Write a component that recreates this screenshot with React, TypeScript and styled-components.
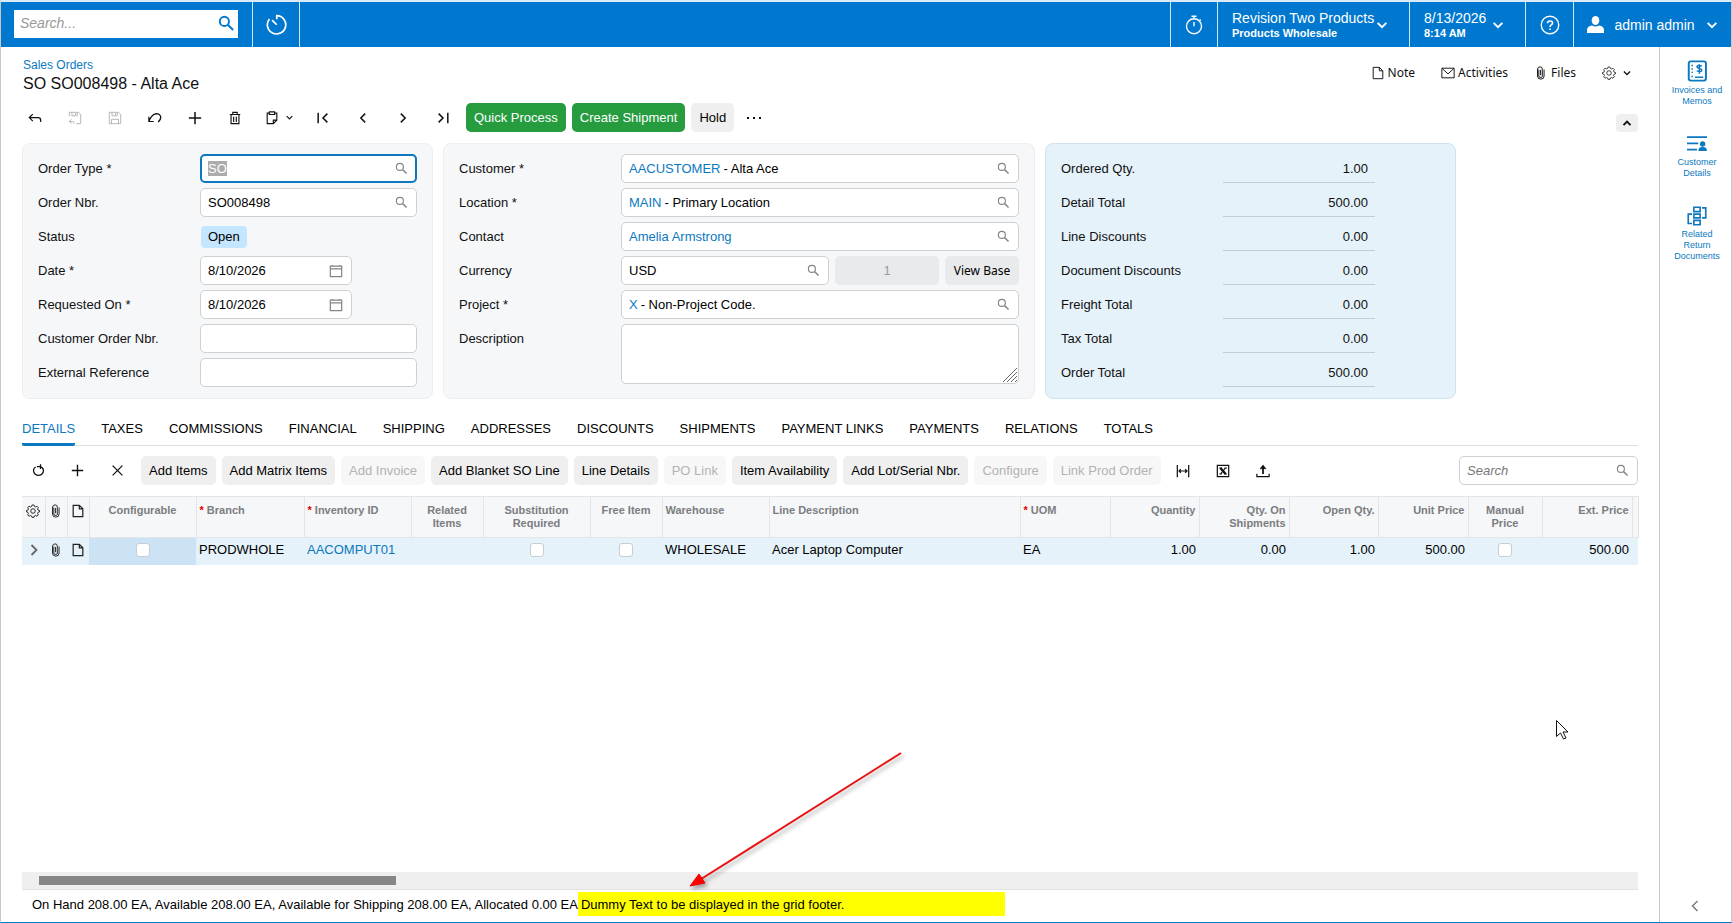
import React, { ReactNode, useEffect, useRef, useId } from 'react';
import styled, { createGlobalStyle, css } from 'styled-components';

const BLUE = '#0078cf';
const LINK = '#0b78bf';

const Global = createGlobalStyle`
  * { box-sizing: border-box; }
  body { margin: 0; background: #fff; color: #111; font: 13px/16px "Liberation Sans", Arial, sans-serif; }
  button, input, textarea { font: inherit; color: inherit; }
  button { cursor: pointer; }
  a { color: ${LINK}; text-decoration: none; }
  svg { display: block; flex: none; }
`;

/* ---------- icons ---------- */

const iconPaths: Record<string, ReactNode> = {
  search: <><circle cx="6" cy="6" r="4.300" /><path d="M9.200 9.200l5 5" strokeWidth="1.900" /></>,
  back: <path d="M5.500 3.500L1.500 7.500l4 4M1.500 7.500h10q3 0 3 3v2" />,
  saveBack: <path d="M1.500 6V1.500h10.500l2.500 2.500v10.500h-5M4.500 1.500v4h6v-4M8.500 2.500v2M4 9.500l-2.500 2.500L4 14.500M1.500 12h4q1.500 0 1.500 2.500" />,
  save: <path d="M1.500 1.500h10.500l2.500 2.500v10.500h-13zM4.500 1.500v4h6v-4M8.500 2.500v2M4 14.500v-5h8v5" />,
  undo: <path d="M1 6.500V12h5.500M1 12Q4 4 9.500 3q4 0 5 3.500.3 3.500-3 6" />,
  plus: <path d="M8 1v14M1 8h14" strokeWidth="1.700" />,
  trash: <><path d="M2 4h12M5.500 4V1.500h5V4M3.500 4v10.500h9V4" /><path d="M6.500 6.500v6M9.500 6.500v6" /></>,
  clipboard: <path d="M5 2.500H2.500v12h7l4-4v-8H11M5 1h6v3H5zM9.500 14.500v-4h4" />,
  first: <path d="M2.500 2v12M13 3L8 8l5 5" />,
  prev: <path d="M10.500 3L5.500 8l5 5" />,
  next: <path d="M5.500 3l5 5-5 5" />,
  last: <path d="M13.500 2v12M3 3l5 5-5 5" />,
  down: <path d="M3 5.500L8 10.500l5-5" />,
  up: <path d="M4 10.500L8 6.500l4 4" />,
  note: <path d="M2.500 1.500h7l4 4v9h-11zM9.500 1.500v4h4" />,
  mail: <path d="M1 2.500h14v11H1zM1.500 3L8 9l6.500-6" />,
  clip: <path d="M5.500 4v7.500q0 1.500 1.500 1.500h1.500q1 0 1-1.500V3.500Q9.500 1 7 1T4 3.500v8Q4 15 7.800 15t3.700-3.500V4M7.500 4.500v6" />,
  gear: <><circle cx="8" cy="8" r="2.600" /><path d="M6.800 1.200h2.400l.4 1.600 1.400.6 1.500-.9 1.600 1.600-.9 1.500.6 1.400 1.600.4v1.600l-1.600.5-.6 1.300.9 1.600-1.600 1.600-1.500-.9-1.400.6-.4 1.500H6.800l-.4-1.500-1.400-.6-1.500.9-1.600-1.600.9-1.600-.6-1.300-1.600-.5V7.400l1.600-.4.6-1.400-.9-1.500 1.600-1.600 1.500.9 1.400-.6z" /></>,
  calendar: <path d="M1.500 2.500h13v12h-13zM1.500 5.500h13M4 1v1.500M12 1v1.500" />,
  refresh: <path d="M4.500 3.700Q1 6 2.200 9.800 3.800 14 8 14t5.800-4.200Q15 5.500 10.500 3.300M6 3.300h4.500V.300M10.500 3.300V6" />,
  cross: <path d="M2 2l12 12M14 2L2 14" />,
  fit: <path d="M1.500 1v14M14.500 1v14M3.500 8h9M5.500 6l-2 2 2 2M10.500 6l2 2-2 2" />,
  excel: <><path d="M1.500 1.500h13v13h-13z" /><path d="M5 4.500l6 7" strokeWidth="2.800" /><path d="M11 4.500l-6 7M3.800 4.500h3M9.500 4.500h3M3.800 11.500h3M9.500 11.500h3" strokeWidth="1.200" /></>,
  upload: <><path d="M1 11v3.500h14V11" strokeWidth="1.400" /><path d="M8 11.500V2.500" strokeWidth="2" /><path d="M4.500 5.500L8 1l3.500 4.500z" fill="currentColor" strokeWidth=".5" /></>,
  history: <path d="M8.200 4V1.200a7 7 0 1 1-5.600 2.600M8.200 8.200L4.600 4.600" strokeWidth="1.300" />,
  stopwatch: <><circle cx="8" cy="9" r="6" /><path d="M6 1h4M8 1v2M8 5.500V9M12.500 3.500l1 1" /></>,
  help: <><circle cx="8" cy="8" r="7" /><path d="M6 6.500Q6 4.800 8 4.800t2 1.600Q10 7.300 9 7.900 8 8.500 8 9.500M8 10.700v1.300" strokeWidth="1.300" /></>,
  invoice: <><rect x="2" y="1" width="12.500" height="14" rx="1.500" strokeWidth="1.400" /><path d="M4.500 3.500v1M4.500 6v1M4.500 8.500v1M4.500 11.500v1M6.500 12.500h6" /><path d="M11.500 4.300q-3.500-1-3.500.6c0 1.600 3.500.8 3.500 2.400q0 1.700-3.700.6M9.700 3v7" strokeWidth="1.100" /></>,
  customer: <><path d="M0 2.500h16M0 7.500h9M0 12.500h8" strokeWidth="1.400" /><circle cx="12.500" cy="8" r="1.600" fill="currentColor" /><path d="M9.700 13q0-2 2.800-2t2.800 2z" fill="currentColor" /></>,
  related: <path d="M5.500 1h5v3.500h-5zM5.500 6.500h5v3h-5zM5.500 11.500h5V15h-5zM12 1.500h3v8h-3M4 6.500H1V14h3" strokeWidth="1.300" />,
};

const Icon = ({ name, size = 16, weight = 1.1 }: { name: string; size?: number; weight?: number }) => (
  <svg width={size} height={size} viewBox="0 0 16 16" fill="none" stroke="currentColor" strokeWidth={weight} aria-hidden="true">
    {iconPaths[name]}
  </svg>
);

/* ---------- shell ---------- */

const Page = styled.div`
  min-height: 100vh;
  display: flex;
  flex-direction: column;
  border: 1px solid #c8c8c8;
  border-top: 2px solid #d9ecf8;
  border-bottom: 1px solid ${BLUE};
`;
const TopBar = styled.header`
  display: flex;
  height: 45px;
  background: ${BLUE};
  color: #fff;
`;
const TopSearch = styled.label`
  display: flex;
  align-items: center;
  width: 224px;
  height: 28px;
  margin: 8px 14px 0 13px;
  padding: 0 3px 2px 6px;
  background: #fff;
  color: ${BLUE};
`;
const PlainInput = styled.input`
  flex: 1;
  min-width: 0;
  width: 100%;
  height: 100%;
  padding: 0;
  border: 0;
  outline: 0;
  background: transparent;
  color: #000;
  &::placeholder { color: #777; font-style: italic; opacity: 1; }
  &::selection { background: #acacac; color: #fff; }
`;
const TopSearchInput = styled(PlainInput)`
  font-size: 14px;
  &::placeholder { color: #999; }
`;
const TopButton = styled.button<{ $w: number; $right?: boolean }>`
  display: flex;
  align-items: center;
  justify-content: center;
  width: ${p => p.$w}px;
  padding: 0;
  border: 0;
  border-left: 1px solid #cfe8f8;
  ${p => p.$right && css`border-right: 1px solid #cfe8f8;`}
  background: none;
  color: #fff;
`;
const TopMenu = styled(TopButton)`
  justify-content: space-between;
  padding: 0 20px 0 14px;
  text-align: left;
  font-size: 14px;
`;
const UserMenu = styled(TopMenu)`
  padding: 0 12px 0 13px;
`;
const Small = styled.span`
  display: block;
  font-size: 11px;
  line-height: 14px;
  font-weight: bold;
`;
const Grow = styled.div` flex: 1; `;
const Body = styled.div`
  flex: 1;
  display: flex;
`;
const Main = styled.main`
  flex: 1;
  min-width: 0;
  display: flex;
  flex-direction: column;
  padding: 0 21px 0 21px;
`;
const Side = styled.nav`
  width: 72px;
  flex: none;
  display: flex;
  flex-direction: column;
  align-items: center;
  border-left: 1px solid #c8c8c8;
  padding: 13px 0 0 3px;
`;
const SideLink = styled.a`
  display: flex;
  flex-direction: column;
  align-items: center;
  gap: 3px;
  margin-bottom: 27px;
  font-size: 9px;
  line-height: 11px;
  text-align: center;
`;
const SideToggle = styled.button`
  margin: auto 5px 8px 0;
  padding: 0;
  border: 0;
  background: none;
  color: #777;
`;

/* ---------- title and actions ---------- */

const TitleRow = styled.div`
  display: flex;
  justify-content: space-between;
  height: 56px;
  padding: 10px 6px 0 1px;
`;
const Crumb = styled.a`
  font-size: 12px;
`;
const Title = styled.h1`
  margin: 0;
  font-size: 16px;
  line-height: 22px;
  font-weight: normal;
`;
const Actions = styled.div`
  display: flex;
  align-items: center;
  height: 32px;
  gap: 26px;
`;
const Action = styled.button<{ $gap?: number }>`
  display: flex;
  align-items: center;
  gap: ${p => p.$gap ?? 3}px;
  padding: 0;
  border: 0;
  background: none;
  font: 12px/16px "Noto Sans", "Liberation Sans", sans-serif;
`;
const Toolbar = styled.div`
  display: flex;
  align-items: center;
  height: 29px;
`;
const IconButton = styled.button<{ $w?: number }>`
  display: flex;
  align-items: center;
  justify-content: center;
  gap: 6px;
  width: ${p => p.$w ?? 40}px;
  height: 28px;
  padding: 0;
  border: 0;
  background: none;
  &:disabled { color: #b4b4b4; }
`;
const IconGroup = styled.div<{ $indent: number; $w: number }>`
  display: flex;
  flex: none;
  justify-content: space-between;
  width: ${p => p.$w}px;
  margin-left: ${p => p.$indent}px;
`;
const Buttons = styled.div<{ $left: number }>`
  display: flex;
  gap: 6px;
  margin-left: ${p => p.$left}px;
`;
const Button = styled.button<{ $green?: boolean }>`
  height: 29px;
  padding: 0 8px;
  border: 0;
  border-radius: 5px;
  white-space: nowrap;
  background: ${p => (p.$green ? '#269c3f' : '#efefef')};
  color: ${p => (p.$green ? '#fff' : '#000')};
  &:disabled { background: #f7f7f7; color: #b3b3b3; }
`;
const Collapse = styled.button`
  display: flex;
  align-items: center;
  justify-content: center;
  align-self: flex-end;
  width: 22px;
  height: 18px;
  margin-left: auto;
  padding: 0;
  border: 0;
  border-radius: 4px;
  background: #efefef;
`;

/* ---------- form ---------- */

const Panels = styled.div`
  display: grid;
  grid-template-columns: minmax(0, 411fr) minmax(0, 592fr) minmax(0, 411fr) minmax(0, 172fr);
  gap: 10px;
  margin-top: 11px;
`;
const Panel = styled.section<{ $blue?: boolean }>`
  height: 256px;
  padding: 10px 15px;
  border: 1px solid ${p => (p.$blue ? '#cfe3ef' : '#eceef0')};
  border-radius: 8px;
  background: ${p => (p.$blue ? '#e5f2fa' : '#f5f7f9')};
`;
const Row = styled.div<{ $label: number }>`
  display: grid;
  grid-template-columns: ${p => p.$label}px minmax(0, 1fr);
  min-height: 29px;
  margin-bottom: 5px;
  & > label { line-height: 29px; }
`;
const Box = styled.div<{ $focus?: boolean; $date?: boolean }>`
  display: flex;
  align-items: center;
  gap: 3px;
  height: 29px;
  padding: ${p => (p.$focus ? '0 7px 0 6px' : '0 8px 0 7px')};
  width: ${p => (p.$date ? '70%' : '100%')};
  border: ${p => (p.$focus ? `2px solid ${LINK}` : '1px solid #cfd0d2')};
  border-radius: 5px;
  background: #fff;
  & > svg { color: #858585; }
`;
const Split = styled.div`
  display: grid;
  grid-template-columns: minmax(0, 208fr) minmax(0, 104fr) minmax(0, 74fr);
  gap: 6px;
`;
const Rate = styled.input`
  width: 100%;
  height: 29px;
  border: 0;
  border-radius: 5px;
  background: #e9eaec;
  text-align: center;
  &:disabled { color: #9b9b9b; }
`;
const ViewBase = styled(Button)`
  padding: 0;
  background: #e9eaec;
  font: 12px/16px "Noto Sans", "Liberation Sans", sans-serif;
`;
const Area = styled.textarea`
  display: block;
  width: 100%;
  height: 60px;
  border: 1px solid #cfd0d2;
  border-radius: 5px;
  background: #fff;
  resize: none;
`;
const AreaWrap = styled.div`
  position: relative;
  & > svg { position: absolute; right: 1px; bottom: 1px; color: #666; }
`;
const Badge = styled.output`
  align-self: center;
  justify-self: start;
  margin-left: 1px;
  padding: 3px 7px;
  border-radius: 4px;
  background: #c4e6ff;
  color: #000;
`;
const Total = styled.input`
  width: 152px;
  height: 29px;
  padding: 0 7px;
  border: 0;
  border-bottom: 1px solid #c0ccd6;
  background: none;
  text-align: right;
`;

/* ---------- tabs and grid ---------- */

const Tabs = styled.div`
  display: flex;
  gap: 26px;
  height: 31px;
  margin-top: 16px;
  border-bottom: 1px solid #dcdfe2;
`;
const Tab = styled.button<{ $on?: boolean }>`
  height: 31px;
  padding: 0 0 1px;
  border: 0;
  border-bottom: 3px solid ${p => (p.$on ? LINK : 'transparent')};
  border-radius: 2px;
  background: none;
  white-space: nowrap;
  color: ${p => (p.$on ? LINK : '#000')};
`;
const GridBar = styled(Toolbar)` margin: 10px 0 11px; `;
const GridSearch = styled(Box)`
  width: 179px;
  margin-left: auto;
`;
const Table = styled.table`
  width: 100%;
  table-layout: fixed;
  border-collapse: collapse;
`;
const Th = styled.th<{ $align?: string }>`
  height: 41px;
  padding: 7px 3px 0;
  border: 1px solid #e3e5e8;
  border-left: 0;
  background: #f5f7f9;
  color: #7b7d80;
  font-size: 11px;
  line-height: 13px;
  vertical-align: top;
  text-align: ${p => p.$align ?? 'left'};
`;
const Star = styled.span` color: #e00000; `;
const Td = styled.td<{ $align?: string; $active?: boolean }>`
  height: 27px;
  padding: 0 3px 2px;
  background: ${p => (p.$active ? '#cbe3f5' : '#e5f2fa')};
  color: #000;
  white-space: nowrap;
  text-align: ${p => p.$align ?? 'left'};
`;
const CellIcon = styled.button`
  display: flex;
  justify-content: center;
  width: 100%;
  padding: 0;
  border: 0;
  background: none;
  color: #222;
`;
const ExpandIcon = styled(CellIcon)` color: #666; `;
const Check = styled.input`
  appearance: none;
  display: block;
  width: 14px;
  height: 14px;
  margin: 0 auto;
  border: 1px solid #c9ccd0;
  border-radius: 3px;
  background: #fff;
`;
const Track = styled.div`
  height: 18px;
  margin-top: auto;
  padding: 4px 17px;
  border-bottom: 1px solid #e2e2e2;
  background: #efefef;
`;
const Thumb = styled.div`
  width: 357px;
  height: 9px;
  background: #868686;
`;
const Footer = styled.footer`
  display: flex;
  height: 32px;
  padding: 2px 0 0 10px;
  line-height: 26px;
  white-space: nowrap;
  color: #000;
`;
const Mark = styled.mark`
  width: 427px;
  height: 24px;
  padding-left: 3px;
  background: #ff0;
`;
const Arrow = styled.svg`
  position: absolute;
  left: 680px;
  top: 745px;
  pointer-events: none;
  filter: drop-shadow(2px 3px 2px rgba(0, 0, 0, 0.35));
`;
const Pointer = styled.svg`
  position: absolute;
  left: 1555px;
  top: 719px;
  pointer-events: none;
`;

type FieldProps = { label: string; value?: string; link?: string; icon?: string; focus?: boolean; date?: boolean; labelWidth?: number };
const Field = ({ label, value = '', link, icon, focus, date, labelWidth = 162 }: FieldProps) => {
  const id = useId();
  const ref = useRef<HTMLInputElement>(null);
  useEffect(() => {
    if (focus) ref.current?.select();
  }, [focus]);
  return (
    <Row $label={labelWidth}>
      <label htmlFor={id}>{label}</label>
      <Box $focus={focus} $date={date}>
        {link && <a href="#record">{link}</a>}
        <PlainInput id={id} ref={ref} defaultValue={value} />
        {icon && <Icon name={icon} size={icon === 'calendar' ? 14 : 13} weight={1.4} />}
      </Box>
    </Row>
  );
};

const totals = [
  ['Ordered Qty.', '1.00'], ['Detail Total', '500.00'], ['Line Discounts', '0.00'], ['Document Discounts', '0.00'],
  ['Freight Total', '0.00'], ['Tax Total', '0.00'], ['Order Total', '500.00'],
];
const tabs = ['DETAILS', 'TAXES', 'COMMISSIONS', 'FINANCIAL', 'SHIPPING', 'ADDRESSES', 'DISCOUNTS', 'SHIPMENTS', 'PAYMENT LINKS', 'PAYMENTS', 'RELATIONS', 'TOTALS'];
const gridActions: [string, boolean][] = [
  ['Add Items', true], ['Add Matrix Items', true], ['Add Invoice', false], ['Add Blanket SO Line', true], ['Line Details', true],
  ['PO Link', false], ['Item Availability', true], ['Add Lot/Serial Nbr.', true], ['Configure', false], ['Link Prod Order', false],
];
type Column = { head: string; w: number; value?: string; align?: string; required?: boolean; check?: boolean; link?: boolean; active?: boolean };
const columns: Column[] = [
  { head: 'Configurable', w: 107, align: 'center', check: true, active: true },
  { head: 'Branch', w: 108, value: 'PRODWHOLE', required: true },
  { head: 'Inventory ID', w: 107, value: 'AACOMPUT01', required: true, link: true },
  { head: 'Related Items', w: 72, align: 'center' },
  { head: 'Substitution Required', w: 107, align: 'center', check: true },
  { head: 'Free Item', w: 72, align: 'center', check: true },
  { head: 'Warehouse', w: 107, value: 'WHOLESALE' },
  { head: 'Line Description', w: 251, value: 'Acer Laptop Computer' },
  { head: 'UOM', w: 90, value: 'EA', required: true },
  { head: 'Quantity', w: 89, value: '1.00', align: 'right' },
  { head: 'Qty. On Shipments', w: 90, value: '0.00', align: 'right' },
  { head: 'Open Qty.', w: 89, value: '1.00', align: 'right' },
  { head: 'Unit Price', w: 90, value: '500.00', align: 'right' },
  { head: 'Manual Price', w: 74, align: 'center', check: true },
  { head: 'Ext. Price', w: 90, value: '500.00', align: 'right' },
];

export default function App() {
  return (
    <Page>
      <Global />
      <TopBar>
        <TopSearch>
          <TopSearchInput placeholder="Search..." aria-label="Search" />
          <Icon name="search" size={17} weight={1.8} />
        </TopSearch>
        <TopButton $w={48} $right aria-label="Recent"><Icon name="history" size={21} /></TopButton>
        <Grow />
        <TopButton $w={47} aria-label="Timer"><Icon name="stopwatch" size={20} /></TopButton>
        <TopMenu $w={192}>
          <span>Revision Two Products<Small>Products Wholesale</Small></span>
          <Icon name="down" size={14} weight={2.2} />
        </TopMenu>
        <TopMenu $w={116}>
          <span>8/13/2026<Small>8:14 AM</Small></span>
          <Icon name="down" size={14} weight={2.2} />
        </TopMenu>
        <TopButton $w={48} aria-label="Help"><Icon name="help" size={20} /></TopButton>
        <UserMenu $w={158}>
          <svg width="17" height="17" viewBox="0 0 17 17" fill="currentColor" aria-hidden="true">
            <ellipse cx="8.500" cy="4.500" rx="3.800" ry="4.500" />
            <path d="M0 17v-3q0-4 5-4.500 3.500 2 7 0 5 .5 5 4.500v3z" />
          </svg>
          <span>admin admin</span>
          <Icon name="down" size={14} weight={2.2} />
        </UserMenu>
      </TopBar>
      <Body>
        <Main>
          <TitleRow>
            <div>
              <Crumb href="#orders">Sales Orders</Crumb>
              <Title>SO SO008498 - Alta Ace</Title>
            </div>
            <Actions>
              <Action><Icon name="note" size={14} />Note</Action>
              <Action><Icon name="mail" size={14} />Activities</Action>
              <Action><Icon name="clip" size={14} />Files</Action>
              <Action $gap={6} aria-label="Settings"><Icon name="gear" size={14} weight={0.9} /><Icon name="down" size={10} weight={2} /></Action>
            </Actions>
          </TitleRow>
          <Toolbar>
            <IconGroup $indent={-7} $w={448}>
              <IconButton aria-label="Back"><Icon name="back" size={14} weight={1.4} /></IconButton>
              <IconButton disabled aria-label="Save and close"><Icon name="saveBack" size={14} /></IconButton>
              <IconButton disabled aria-label="Save"><Icon name="save" size={14} /></IconButton>
              <IconButton aria-label="Undo"><Icon name="undo" size={14} weight={1.4} /></IconButton>
              <IconButton aria-label="Add"><Icon name="plus" size={14} /></IconButton>
              <IconButton aria-label="Delete"><Icon name="trash" size={14} weight={1.3} /></IconButton>
              <IconButton $w={48} aria-label="Clipboard"><Icon name="clipboard" size={14} weight={1.3} /><Icon name="down" size={9} weight={2} /></IconButton>
              <IconButton aria-label="First"><Icon name="first" size={14} weight={1.7} /></IconButton>
              <IconButton aria-label="Previous"><Icon name="prev" size={14} weight={1.7} /></IconButton>
              <IconButton aria-label="Next"><Icon name="next" size={14} weight={1.7} /></IconButton>
              <IconButton aria-label="Last"><Icon name="last" size={14} weight={1.7} /></IconButton>
            </IconGroup>
            <Buttons $left={3}>
              <Button $green>Quick Process</Button>
              <Button $green>Create Shipment</Button>
              <Button>Hold</Button>
            </Buttons>
            <IconButton aria-label="More">
              <svg width="16" height="4" viewBox="0 0 16 4" fill="currentColor" aria-hidden="true"><path d="M1 1h2v2H1zM7 1h2v2H7zM13 1h2v2h-2z" /></svg>
            </IconButton>
            <Collapse aria-label="Collapse"><Icon name="up" size={14} weight={2.2} /></Collapse>
          </Toolbar>
          <Panels>
            <Panel>
              <Field label="Order Type *" value="SO" icon="search" focus />
              <Field label="Order Nbr." value="SO008498" icon="search" />
              <Row $label={162}><label htmlFor="status">Status</label><Badge id="status">Open</Badge></Row>
              <Field label="Date *" value="8/10/2026" icon="calendar" date />
              <Field label="Requested On *" value="8/10/2026" icon="calendar" date />
              <Field label="Customer Order Nbr." />
              <Field label="External Reference" />
            </Panel>
            <Panel>
              <Field label="Customer *" link="AACUSTOMER" value="- Alta Ace" icon="search" />
              <Field label="Location *" link="MAIN" value="- Primary Location" icon="search" />
              <Field label="Contact" link="Amelia Armstrong" icon="search" />
              <Row $label={162}>
                <label htmlFor="currency">Currency</label>
                <Split>
                  <Box><PlainInput id="currency" defaultValue="USD" /><Icon name="search" size={13} weight={1.4} /></Box>
                  <Rate aria-label="Exchange rate" defaultValue="1" disabled />
                  <ViewBase>View Base</ViewBase>
                </Split>
              </Row>
              <Field label="Project *" link="X" value="- Non-Project Code." icon="search" />
              <Row $label={162}>
                <label htmlFor="description">Description</label>
                <AreaWrap>
                  <Area id="description" />
                  <svg width="16" height="16" viewBox="0 0 16 16" stroke="currentColor" aria-hidden="true"><path d="M1 15L15 1M5 15L15 5M9 15l6-6M13 15l2-2" /></svg>
                </AreaWrap>
              </Row>
            </Panel>
            <Panel $blue>
              {totals.map(([label, value]) => (
                <Row $label={162} key={label}>
                  <label htmlFor={label}>{label}</label>
                  <Total id={label} defaultValue={value} readOnly />
                </Row>
              ))}
            </Panel>
          </Panels>
          <Tabs role="tablist">
            {tabs.map((t, i) => <Tab key={t} role="tab" aria-selected={i === 0} $on={i === 0}>{t}</Tab>)}
          </Tabs>
          <GridBar>
            <IconGroup $indent={-3} $w={118}>
              <IconButton aria-label="Refresh"><Icon name="refresh" size={13} weight={1.6} /></IconButton>
              <IconButton aria-label="Add row"><Icon name="plus" size={13} /></IconButton>
              <IconButton aria-label="Delete row"><Icon name="cross" size={13} weight={1.6} /></IconButton>
            </IconGroup>
            <Buttons $left={4}>
              {gridActions.map(([label, on]) => <Button key={label} disabled={!on}>{label}</Button>)}
            </Buttons>
            <IconGroup $indent={3} $w={119}>
              <IconButton aria-label="Fit columns"><Icon name="fit" size={14} weight={1.4} /></IconButton>
              <IconButton aria-label="Export to Excel"><Icon name="excel" size={14} weight={1.4} /></IconButton>
              <IconButton aria-label="Upload"><Icon name="upload" size={14} /></IconButton>
            </IconGroup>
            <GridSearch>
              <PlainInput placeholder="Search" aria-label="Search lines" />
              <Icon name="search" size={13} weight={1.4} />
            </GridSearch>
          </GridBar>
          <Table>
            <colgroup>
              <col width="23" /><col width="22" /><col width="22" />
              {columns.map(c => <col key={c.head} width={c.w} />)}
              <col width="6" />
            </colgroup>
            <thead>
              <tr>
                <Th><CellIcon aria-label="Columns"><Icon name="gear" size={14} /></CellIcon></Th>
                <Th><CellIcon aria-label="Files"><Icon name="clip" size={14} /></CellIcon></Th>
                <Th><CellIcon aria-label="Notes"><Icon name="note" size={14} weight={1.4} /></CellIcon></Th>
                {columns.map(c => <Th key={c.head} $align={c.align}>{c.required && <Star>* </Star>}{c.head}</Th>)}
                <Th />
              </tr>
            </thead>
            <tbody>
              <tr>
                <Td><ExpandIcon aria-label="Open row"><Icon name="next" size={16} weight={1.8} /></ExpandIcon></Td>
                <Td><CellIcon aria-label="Row files"><Icon name="clip" size={14} /></CellIcon></Td>
                <Td><CellIcon aria-label="Row notes"><Icon name="note" size={14} weight={1.4} /></CellIcon></Td>
                {columns.map(c => (
                  <Td key={c.head} $align={c.align} $active={c.active}>
                    {c.check ? <Check type="checkbox" aria-label={c.head} /> : c.link ? <a href="#item">{c.value}</a> : c.value}
                  </Td>
                ))}
                <Td />
              </tr>
            </tbody>
          </Table>
          <Track><Thumb /></Track>
          <Footer>
            <span>On Hand 208.00 EA, Available 208.00 EA, Available for Shipping 208.00 EA, Allocated 0.00 EA</span>
            <Mark>Dummy Text to be displayed in the grid footer.</Mark>
          </Footer>
        </Main>
        <Side>
          <SideLink href="#invoices"><Icon name="invoice" size={22} />Invoices and<br />Memos</SideLink>
          <SideLink href="#customer"><Icon name="customer" size={20} />Customer<br />Details</SideLink>
          <SideLink href="#returns"><Icon name="related" size={20} />Related<br />Return<br />Documents</SideLink>
          <SideToggle aria-label="Expand side panel"><Icon name="prev" size={16} weight={1.4} /></SideToggle>
        </Side>
      </Body>
      <Arrow width="230" height="150" viewBox="0 0 230 150" aria-hidden="true">
        <path d="M221 8L18 136" stroke="#e81212" strokeWidth="2" />
        <path d="M10 141l9-12 6 9z" fill="#f00" stroke="#e00" />
      </Arrow>
      <Pointer width="14" height="22" viewBox="0 0 14 22" aria-hidden="true">
        <path d="M1.500 1.500v16l4-3.500 3 6 2.500-1-3-6h5z" fill="#fff" stroke="#111" />
      </Pointer>
    </Page>
  );
}
